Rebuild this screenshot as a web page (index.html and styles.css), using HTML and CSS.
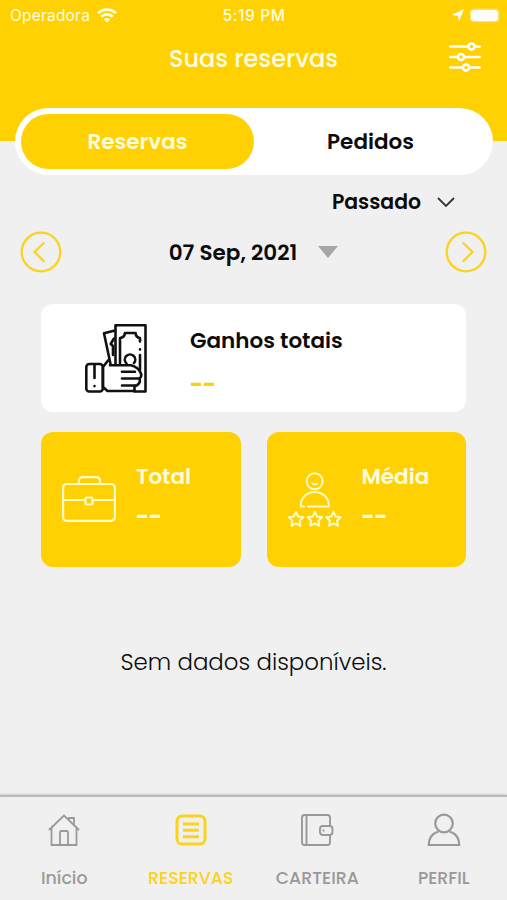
FILE: index.html
```html
<!DOCTYPE html>
<html lang="pt-BR">
  <head>
    <meta charset="utf-8">
    <meta name="viewport" content="width=device-width, initial-scale=1.0">
    <title>Suas reservas</title>
    <link rel="stylesheet" href="styles.css">
  </head>
  <body>
    <header class="header">
      <div class="status">
        <div class="carrier">
          <span class="operator">Operadora</span>
          <svg width="20" height="15" viewBox="0 0 20 15" fill="none" stroke="#fffde8" stroke-width="2.7">
            <path d="M1 5.3a12.7 12.7 0 0 1 18 0M4.2 8.8a8.2 8.2 0 0 1 11.6 0"/>
            <path d="M10 14.5l-3.1-3.1a4.4 4.4 0 0 1 6.2 0z" fill="#fffde8" stroke="none"/>
          </svg>
        </div>
        <span class="clock">5:19 PM</span>
        <div class="power">
          <svg width="12" height="13" viewBox="0 0 12 13"><path d="M0 6L12 0L7 12.5L6 6.8z" fill="#fff"/></svg>
          <span class="battery"></span>
        </div>
      </div>
      <div class="titlebar">
        <h1 class="title">Suas reservas</h1>
        <svg class="filter" width="32" height="30" viewBox="0 0 32 30" fill="#ffd103" stroke="#fff" stroke-width="2.6" stroke-linecap="round">
          <path d="M1.3 4.5H30.7M1.3 15H30.7M1.3 25.5H30.7"/>
          <circle cx="22.5" cy="4.5" r="3"/>
          <circle cx="12" cy="15" r="3"/>
          <circle cx="17" cy="25.5" r="3"/>
        </svg>
      </div>
    </header>
    <main class="content">
      <div class="switch">
        <button class="option active">Reservas</button>
        <button class="option">Pedidos</button>
      </div>
      <div class="period">
        <span>Passado</span>
        <svg width="18" height="10" viewBox="0 0 18 10" fill="none" stroke="#333" stroke-width="1.8"><path d="M1 1L9 9L17 1"/></svg>
      </div>
      <div class="dates">
        <svg width="42" height="42" viewBox="0 0 42 42" fill="none" stroke="#fbd21f" stroke-width="2.3"><circle cx="21" cy="21" r="19.3"/><path d="M24.3 11.5L14.5 21L24.3 30.8"/></svg>
        <div class="day">
          <span>07 Sep, 2021</span>
          <svg width="20" height="12" viewBox="0 0 20 12"><path d="M0 0H20L10 12z" fill="#a6a6a6"/></svg>
        </div>
        <svg width="42" height="42" viewBox="0 0 42 42" fill="none" stroke="#fbd21f" stroke-width="2.3"><circle cx="21" cy="21" r="19.3"/><path d="M17.7 11.5L27.5 21L17.7 30.8"/></svg>
      </div>
      <section class="cards">
        <div class="card earnings">
          <svg width="62" height="70" viewBox="0 0 62 70" fill="none" stroke="#111" stroke-width="2.6" stroke-linecap="round" stroke-linejoin="round">
            <path d="M30.5 41V1.3H60.5V67.5H49.5V62"/>
            <path d="M29 6.7L19 9.3L25.5 40M29 14.5L25.7 20L28 22V31"/>
            <path d="M35 39V14Q39.5 13.5 40 9H50.5Q51 13.5 55 14V17.5M55 25.3V25.4M55 31V46"/>
            <path d="M41.5 39.5A5.2 5.2 0 1 1 49 39"/>
            <path d="M23 36.5L18 43V63L22.5 67H49.5M25 41.3H46Q53 43 55.5 48.5Q57.5 52 54.5 54.5Q56 59 51.5 61.5"/>
            <path d="M37 47.8H50M37 54.5H54.5M37 61.5H51.5"/>
            <rect x="1.3" y="40" width="16.5" height="27.5" rx="3"/>
            <path d="M9.5 41V54M9.5 62V62.1"/>
          </svg>
          <div class="info">
            <span>Ganhos totais</span>
            <span class="value">--</span>
          </div>
        </div>
        <div class="card small">
          <svg width="54" height="46" viewBox="0 0 54 46" fill="none" stroke="#fffbc8" stroke-width="2.2">
            <rect x="1.1" y="8" width="51.8" height="36.8" rx="3.5"/>
            <path d="M17 8V5Q17 1.2 21 1.2H34Q38 1.2 38 5V8M1 24H23M31 24H53"/>
            <rect x="23.5" y="21.5" width="7" height="7" rx="1"/>
          </svg>
          <div class="info">
            <span>Total</span>
            <span class="value">--</span>
          </div>
        </div>
        <div class="card small">
          <svg width="54" height="56" viewBox="0 0 54 56" fill="none" stroke="#fffbc8" stroke-width="2" stroke-linecap="round" stroke-linejoin="round">
            <circle cx="26.700" cy="9.300" r="8"/>
            <path d="M24.5 11.5Q27 13 29.5 11.5"/>
            <path d="M16 34.5H12.8V33A14 13 0 0 1 40.800 33V34.5H20"/>
            <path id="star" d="M8 40L10.2 44.6L15.3 45.2L11.6 48.7L12.5 53.8L8 51.3L3.5 53.8L4.4 48.7L0.9 45.2L5.8 44.6z"/>
            <use href="#star" x="18.800"/>
            <use href="#star" x="37.500"/>
          </svg>
          <div class="info">
            <span>Média</span>
            <span class="value">--</span>
          </div>
        </div>
      </section>
      <p class="empty">Sem dados disponíveis.</p>
    </main>
    <nav class="tabs">
      <a class="tab">
        <svg width="34" height="34" viewBox="0 0 34 34" fill="none" stroke="#999" stroke-width="1.8">
          <path d="M2 17L17 2.5L32 17M4.5 15V32H29.5V15M13 32V19.5Q13 18 14.5 18H19.5Q21 18 21 19.5V32M22 7V5H27V12"/>
        </svg>
        <span>Início</span>
      </a>
      <a class="tab selected">
        <svg width="34" height="34" viewBox="0 0 34 34" fill="none" stroke="#fdd21a" stroke-width="3">
          <rect x="3" y="3" width="28" height="28" rx="5"/>
          <path d="M9 11H25M9 17.3H25M9 23.7H25"/>
        </svg>
        <span>RESERVAS</span>
      </a>
      <a class="tab">
        <svg width="34" height="34" viewBox="0 0 34 34" fill="none" stroke="#999" stroke-width="1.9">
          <path d="M30 13V4.5Q30 2 27.5 2H4.5Q2 2 2 4.5V29.5Q2 32 4.5 32H27.5Q30 32 30 29.5V22M6.5 2V32"/>
          <rect x="20" y="13" width="12.5" height="9" rx="3"/>
          <path d="M23.5 16.5V18.5"/>
        </svg>
        <span>CARTEIRA</span>
      </a>
      <a class="tab">
        <svg width="34" height="34" viewBox="0 0 34 34" fill="none" stroke="#999" stroke-width="2.2">
          <circle cx="17" cy="10.5" r="8.8"/>
          <path d="M11.5 18.5C5 20.5 1.8 25.5 1.8 32H32.2C32.2 25.5 29 20.5 22.5 18.5"/>
        </svg>
        <span>PERFIL</span>
      </a>
    </nav>
  </body>
</html>
```
FILE: styles.css
```css
* {
box-sizing: border-box;
}
body {
margin: 0;
height: 900px;
display: flex;
flex-direction: column;
background-color: #f0f0f0;
color: #0b0b0b;
font-family: Poppins, Inter, sans-serif;
font-weight: 600;
overflow: hidden;
}
svg {
display: block;
flex: none;
}
span {
white-space: nowrap;
}
.header {
height: 141px;
flex: none;
background-color: #ffd103;
color: #fffde0;
}
.status {
height: 30px;
padding: 0 9px 0 10px;
display: grid;
grid-template-columns: 1fr auto 1fr;
align-items: center;
font-family: Inter, sans-serif;
font-size: 15.5px;
font-weight: 400;
}
.carrier, .power {
display: flex;
align-items: center;
gap: 7px;
}
.operator {
letter-spacing: 0.2px;
}
.power {
justify-content: flex-end;
}
.clock {
font-weight: 500;
letter-spacing: 0.6px;
}
.battery {
width: 27px;
height: 11px;
background-color: white;
border-radius: 3px;
box-shadow: 0 0 2px 1px #ffe77a;
}
.titlebar {
height: 56px;
padding: 0 26px;
display: grid;
grid-template-columns: 1fr auto 1fr;
align-items: center;
}
.title {
grid-column: 2;
margin: 0;
font-size: 24px;
font-weight: 500;
}
.filter {
justify-self: end;
margin-top: -2px;
}
.content {
flex: 1;
}
.switch {
display: flex;
height: 67px;
margin: -33px 14px 0 15px;
padding: 6px;
border-radius: 34px;
background-color: white;
}
.option {
flex: 1;
padding: 0;
border: 0;
border-radius: 28px;
background: none;
color: #0b0b0b;
font: inherit;
font-size: 21.5px;
}
.option.active {
background-color: #ffd103;
color: #fffde0;
}
.period {
display: flex;
justify-content: flex-end;
align-items: center;
gap: 16px;
height: 54px;
padding-right: 52px;
font-size: 20.4px;
}
.dates {
display: flex;
justify-content: space-between;
align-items: center;
height: 46px;
padding: 0 20px;
font-size: 21.5px;
}
.day {
display: flex;
align-items: center;
gap: 21px;
}
.cards {
display: grid;
grid-template-columns: 1fr 1fr;
gap: 20px 26px;
padding: 29px 41px 0;
}
.card {
display: flex;
border-radius: 12px;
}
.info {
display: flex;
flex-direction: column;
font-size: 21.5px;
line-height: 31px;
}
.earnings {
grid-column: 1 / 3;
height: 108px;
padding: 20px 44px;
gap: 43px;
background-color: white;
}
.value {
margin-top: 9px;
font-size: 22.5px;
font-weight: 700;
}
.earnings .info {
margin-top: 1px;
}
.earnings .value {
margin-top: 13px;
color: #ffd103;
}
.small {
height: 135px;
padding: 29px 20px 0 21px;
gap: 20px;
background-color: #ffd103;
color: #fffde0;
}
.small svg {
margin-top: 15px;
}
.small + .small svg {
margin-top: 11px;
}
.empty {
margin: 79px 0 0;
text-align: center;
font-size: 22.9px;
font-weight: 300;
line-height: 33px;
}
.tabs {
display: grid;
grid-template-columns: repeat(4, 1fr);
height: 105px;
padding-left: 1px;
flex: none;
border-top: 2px solid #b9b9b9;
box-shadow: 0 -1px 2px #ccc;
}
.tab {
display: flex;
flex-direction: column;
align-items: center;
gap: 17px;
padding-top: 16px;
color: #999;
font-size: 17.4px;
font-weight: 500;
line-height: 28px;
}
.tab.selected {
color: #fdd21a;
}
```
